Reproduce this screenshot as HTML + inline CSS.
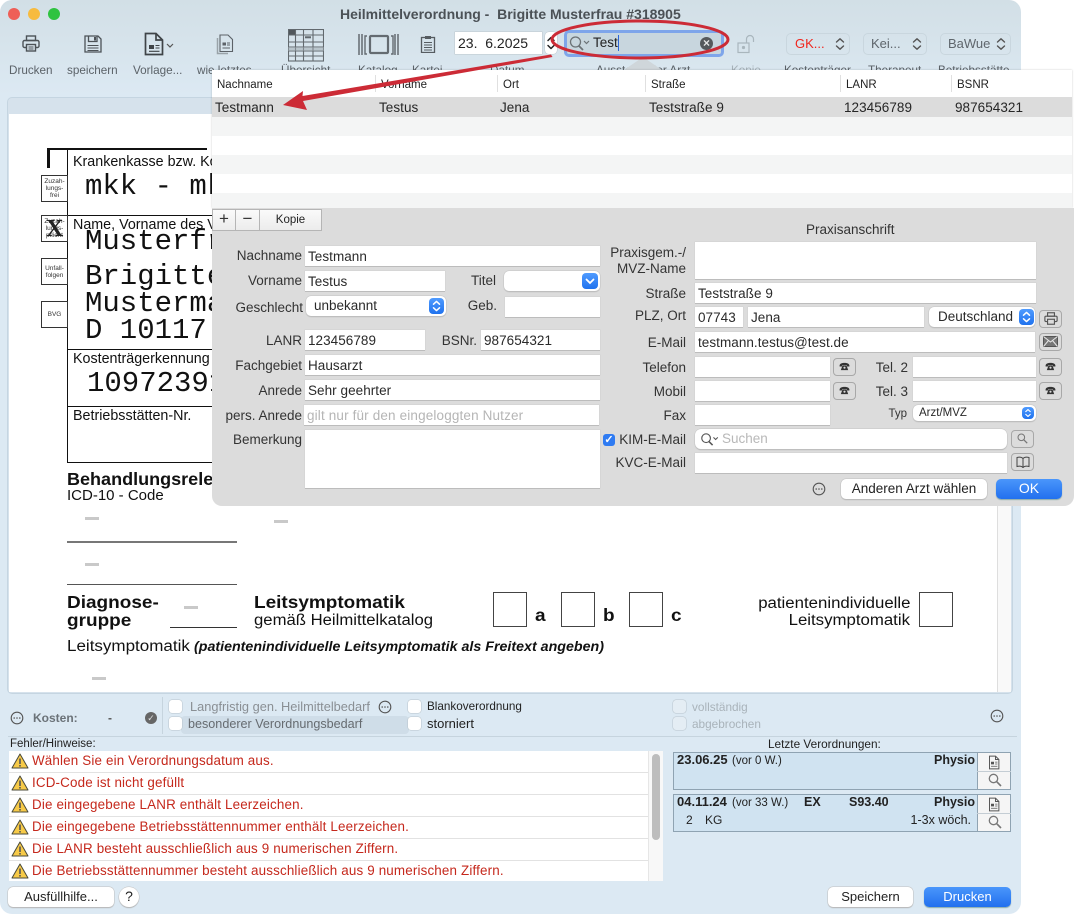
<!DOCTYPE html>
<html lang="de"><head><meta charset="utf-8"><title>Heilmittelverordnung</title>
<style>
*{box-sizing:border-box}
html,body{margin:0;padding:0;background:#fff}
body{position:relative;width:1087px;height:914px;overflow:hidden;font-family:"Liberation Sans",sans-serif;font-size:13px;color:#262626}
.a{position:absolute}
.t{position:absolute;white-space:nowrap;line-height:16px}
.r{position:absolute;white-space:nowrap;line-height:16px;text-align:right}
#win{position:absolute;left:0;top:0;width:1021px;height:914px;border-radius:12px;background:linear-gradient(#d2dfe6 0,#d6e3eb 40px,#dce9f3 95px);overflow:hidden}
.tl{font-size:11.7px;color:#5b6268}
.pg{position:absolute;background:#111}
.m{font-family:"Liberation Mono",monospace;font-size:29px;line-height:30px;color:#111;position:absolute;white-space:nowrap}
.h{position:absolute;white-space:nowrap;color:#111;line-height:18px}
.bx{font-weight:bold;font-size:17.5px;transform:scaleX(1.085);transform-origin:left center}
.sb{position:absolute;border:1px solid #333;background:#fff;font-size:6.5px;line-height:7px;text-align:center;color:#333;padding-top:2px;width:27px;height:27px}
.dash{position:absolute;width:14px;height:3px;background:#c9c9c9}
.ck{position:absolute;width:13px;height:13px;background:#fff;border-radius:3px;box-shadow:0 0 0 .5px #b8c4cc}
.row{position:absolute;left:0;width:639px;height:22px;border-bottom:1px solid #e2e2e2;color:#c5281c;font-size:13.4px;line-height:20px;padding-left:23px;white-space:nowrap;letter-spacing:.16px}
.row svg{position:absolute;left:2px;top:2px}
.tb{position:absolute;height:20px;border:1px solid #c9d6de;border-radius:5px;font-size:13px;line-height:18px;color:#5f666c}
#pop{position:absolute;left:212px;top:70px;width:862px;height:437px}
.th{position:absolute;top:8px;font-size:11.5px;line-height:14px;color:#222;white-space:nowrap}
.thd{position:absolute;top:5px;width:1px;height:17px;background:#e0e0e0}
.td{position:absolute;top:30px;font-size:13.5px;line-height:16px;color:#262626;white-space:nowrap;letter-spacing:.05px}
.s{position:absolute;left:0;width:860px;height:19px}
.f{position:absolute;background:#fff;box-shadow:0 0 0 .5px #cfcfcf,0 1px 0 #a9a9a9;font-size:13.5px;line-height:21px;padding-left:3px;height:20px;white-space:nowrap;overflow:hidden;color:#2a2a2a;letter-spacing:.05px}
.p{position:absolute;background:#fff;border-radius:5px;box-shadow:0 0 0 .5px #c4c4c4,0 1px 1px #aaa;height:20px;font-size:13.5px;line-height:19px;white-space:nowrap;color:#2a2a2a}
.st{position:absolute;right:2px;top:2px;width:15px;height:16px;border-radius:4px;background:linear-gradient(#4f9bff,#1f72ee)}
.b{position:absolute;width:23px;height:18px;border:1px solid #a8a8a8;border-radius:4px;background:#dcdcdc;text-align:center;font-size:11px;line-height:15px;color:#333}
.lb{position:absolute;white-space:nowrap;text-align:right;line-height:16px;font-size:13.5px;color:#333;margin-top:1px}
.btn{position:absolute;height:20px;border-radius:5px;background:#fff;box-shadow:0 0 0 .5px #c0c0c0,0 1px 1px #a8a8a8;text-align:center;font-size:13px;line-height:19px;color:#222}
.blue{background:linear-gradient(#4a96fb,#2270ee);color:#fff;box-shadow:0 1px 1px #8aa}
</style></head><body>
<svg width="0" height="0" style="position:absolute">
<defs>
<symbol id="dots" viewBox="0 0 14 14"><circle cx="7" cy="7" r="5.8" fill="none" stroke="#555" stroke-width="1.1"/><circle cx="4.2" cy="7" r=".8" fill="#555"/><circle cx="7" cy="7" r=".8" fill="#555"/><circle cx="9.8" cy="7" r=".8" fill="#555"/></symbol>
<symbol id="warn" viewBox="0 0 18 16"><path d="M9 1 L17 15 H1 Z" fill="#f7ca48" stroke="#4a4a3a" stroke-width="1" stroke-linejoin="round"/><rect x="8.2" y="5.5" width="1.6" height="5.5" fill="#555"/><rect x="8.2" y="12" width="1.6" height="1.6" fill="#555"/></symbol>
<symbol id="updn" viewBox="0 0 15 16"><path d="M4.5 6.2 L7.5 3.4 L10.5 6.2 M4.5 9.8 L7.5 12.6 L10.5 9.8" fill="none" stroke="#fff" stroke-width="1.5" stroke-linecap="round" stroke-linejoin="round"/></symbol>
<symbol id="ud" viewBox="0 0 12 16"><path d="M2.5 6 L6 2.8 L9.5 6 M2.5 10 L6 13.2 L9.5 10" fill="none" stroke="#555" stroke-width="1.4" stroke-linecap="round" stroke-linejoin="round"/></symbol>
<symbol id="doc" viewBox="0 0 16 20"><path d="M2 1.5 H10 L14.5 6 V18.5 H2 Z M10 1.5 V6 H14.5" fill="none" stroke="#555" stroke-width="1.3"/><rect x="4" y="9" width="4" height="3.5" fill="#555"/><path d="M9.5 9.5H12.5M9.5 12H12.5M4 15H12.5" stroke="#555"/></symbol>
<symbol id="mag" viewBox="0 0 14 14"><circle cx="5.5" cy="5.5" r="4.2" fill="none" stroke="#777" stroke-width="1.3"/><path d="M8.7 8.7 L13 13" stroke="#777" stroke-width="1.6"/></symbol>
<symbol id="ph" viewBox="0 0 13 11"><path d="M.5 4.500C.5 2 3.500 1 6.500 1S12.500 2 12.500 4.500V5.500H9.500V4H3.500V5.500H.5Z" fill="#333"/><path d="M4 4.500H9L11 10H2Z" fill="#333"/><circle cx="6.500" cy="7" r="1.300" fill="#dcdcdc"/></symbol>
</defs></svg>

<div id="win">
<!-- traffic lights -->
<div class="a" style="left:8px;top:8px;width:12px;height:12px;border-radius:50%;background:#ee5f57"></div>
<div class="a" style="left:28px;top:8px;width:12px;height:12px;border-radius:50%;background:#f7bb3f"></div>
<div class="a" style="left:48px;top:8px;width:12px;height:12px;border-radius:50%;background:#2fc340"></div>
<div class="t" style="left:340px;top:6px;font-weight:bold;font-size:14px;color:#4b5156;white-space:pre">Heilmittelverordnung -  Brigitte Musterfrau #318905</div>

<!-- toolbar icons -->
<svg class="a" style="left:22px;top:35px" width="18" height="17" viewBox="0 0 18 17" fill="none" stroke="#4c5257" stroke-width="1.4"><rect x="4.5" y="1" width="9" height="4.5"/><rect x="1" y="5.5" width="16" height="7" rx="1.5"/><rect x="4.5" y="9.5" width="9" height="6.5" fill="#d8e4ec"/><path d="M6.5 12H11.5M6.5 14H11.5" stroke-width=".9"/></svg>
<svg class="a" style="left:84px;top:35px" width="18" height="18" viewBox="0 0 18 18" fill="none" stroke="#4c5257" stroke-width="1.3"><path d="M1 1H14L17 4V17H1Z"/><path d="M4.5 1V6.5H13V1"/><rect x="10" y="2" width="2" height="3.5" fill="#4c5257" stroke="none"/><path d="M3.5 10.5H14.500M3.500 13H14.500M3.500 15.500H14.500" stroke-width="1"/></svg>
<svg class="a" style="left:144px;top:32px" width="20" height="24" viewBox="0 0 20 24" fill="none" stroke="#3f4448" stroke-width="1.7"><path d="M1.500 1.500H12L18.500 8V22.500H1.500Z"/><path d="M12 1.500V8H18.500"/><rect x="5" y="13" width="5" height="4" fill="#3f4448" stroke="none"/><path d="M11.500 13.500H15.500M11.500 16H15.500M5 19.300H15.500" stroke-width="1.100"/></svg>
<svg class="a" style="left:166px;top:43px" width="8" height="6" viewBox="0 0 8 6"><path d="M1 1L4 4L7 1" fill="none" stroke="#555" stroke-width="1.200"/></svg>
<svg class="a" style="left:216px;top:34px" width="18" height="21" viewBox="0 0 18 21" fill="none" stroke="#5c6268" stroke-width="1.100"><path d="M1.500 4V19.500H12" stroke="#9aa3a9" stroke-width="1.500"/><path d="M4 1H12L16.500 5.500V17.500H4Z"/><rect x="6.500" y="8.500" width="3.500" height="3" fill="#5c6268" stroke="none"/><path d="M11 9H14M11 11H14M6.500 14H14" stroke-width=".9"/></svg>
<svg class="a" style="left:288px;top:29px" width="36" height="33" viewBox="0 0 36 33" fill="none" stroke="#62696e" stroke-width="1.100"><rect x=".5" y=".5" width="35" height="31.500"/><rect x="1" y="1" width="6" height="5" fill="#51575c" stroke="none"/><path d="M0 6H36M0 13H36M0 18H36M0 22H36M0 27H36M7.500 0V32M15.500 0V32M25 0V32"/><path d="M17 8.300H23" stroke-width="2"/><rect x="0" y="18" width="36" height="4" fill="#9ba5ac" stroke="none" opacity=".5"/></svg>
<svg class="a" style="left:358px;top:33px" width="41" height="24" viewBox="0 0 41 24" fill="none" stroke="#646b71"><rect x="12" y="3" width="18" height="17" rx="1" stroke-width="2.200"/><path d="M1 1V22M4 1V22M37 1V22M40 1V22" stroke-width="1.500"/><path d="M9 3 L7 3V21L9 21M33 3L35 3V21L33 21" stroke-width="1.400"/></svg>
<svg class="a" style="left:420px;top:35px" width="16" height="18" viewBox="0 0 16 18" fill="none" stroke="#565c61" stroke-width="1.300"><rect x="1.500" y="2.500" width="13" height="15"/><rect x="5" y="1" width="6" height="3" fill="#565c61" stroke="none"/><path d="M4 7.500H12M4 10H12M4 12.500H12M4 15H12" stroke-width="1"/></svg>

<div class="t tl" style="left:9px;top:63px">Drucken</div>
<div class="t tl" style="left:67px;top:63px">speichern</div>
<div class="t tl" style="left:133px;top:63px">Vorlage...</div>
<div class="t tl" style="left:197px;top:63px">wie letztes</div>
<div class="t tl" style="left:281px;top:63px">Übersicht</div>
<div class="t tl" style="left:358px;top:63px">Katalog</div>
<div class="t tl" style="left:412px;top:63px">Kartei</div>
<div class="t tl" style="left:490px;top:63px">Datum</div>
<div class="t tl" style="left:596px;top:63px">Ausstellender Arzt</div>
<div class="t tl" style="left:731px;top:63px;color:#a6b1b8">Kopie</div>
<div class="t tl" style="left:784px;top:63px">Kostenträger</div>
<div class="t tl" style="left:868px;top:63px">Therapeut</div>
<div class="t tl" style="left:938px;top:63px">Betriebsstätte</div>

<!-- date -->
<div class="a" style="left:455px;top:32px;width:87px;height:22px;background:#fff;box-shadow:0 0 0 .5px #bcc6cc;font-size:14px;line-height:22px;padding-left:3px;white-space:pre;color:#222">23.  6.2025</div>
<div class="a" style="left:545px;top:32px;width:12px;height:22px;background:#fff;border-radius:4px;box-shadow:0 0 0 .5px #bcc6cc"><svg width="12" height="22" viewBox="0 0 12 22" style="display:block"><path d="M3 8.500L6 5.500L9 8.500M3 13.500L6 16.500L9 13.500" fill="none" stroke="#222" stroke-width="1.500" stroke-linecap="round" stroke-linejoin="round"/></svg></div>

<!-- search -->
<div class="a" style="left:564px;top:30px;width:160px;height:27px;border:3px solid #7ea5ea;border-radius:5px;background:#c8d6de"></div>
<svg class="a" style="left:569px;top:36px" width="22" height="15" viewBox="0 0 22 15" fill="none" stroke="#6c7276"><circle cx="6.500" cy="6" r="5" stroke-width="1.300"/><path d="M10 10L14 14" stroke-width="1.800"/><path d="M15 5L17.500 7.500L20 5" stroke-width="1.200"/></svg>
<div class="t" style="left:593px;top:35px;font-size:13.500px;color:#222">Test</div>
<div class="a" style="left:618px;top:35px;width:1px;height:16px;background:#2b66d8"></div>
<div class="a" style="left:700px;top:37px;width:13px;height:13px;border-radius:50%;background:#55595c;color:#e6e6e6;font-size:12px;line-height:12px;text-align:center;font-weight:bold">×</div>

<svg class="a" style="left:737px;top:34px" width="20" height="20" viewBox="0 0 20 20" fill="none" stroke="#a9b6bd" stroke-width="1.200"><rect x="1" y="9" width="11" height="9.500"/><circle cx="6.500" cy="13.500" r="1" fill="#a9b6bd"/><path d="M9.500 9V5A3.500 3.500 0 0 1 16.500 5V8"/></svg>

<div class="tb" style="left:786px;top:33px;width:64px;height:22px;line-height:20px;padding-left:8px;color:#f0261e">GK...<svg class="a" style="left:47px;top:2px" width="12" height="16"><use href="#ud"/></svg></div>
<div class="tb" style="left:863px;top:33px;width:64px;height:22px;line-height:20px;padding-left:7px">Kei...<svg class="a" style="left:47px;top:2px" width="12" height="16"><use href="#ud"/></svg></div>
<div class="tb" style="left:940px;top:33px;width:71px;height:22px;line-height:20px;padding-left:7px">BaWue<svg class="a" style="left:54px;top:2px" width="12" height="16"><use href="#ud"/></svg></div>

<!-- document frame -->
<div class="a" style="left:7px;top:97px;width:1006px;height:597px;border:1px solid #c5d5e1;border-radius:5px;background:#d6e2ec;overflow:hidden">
  <div class="a" style="left:1px;top:16px;width:989px;height:578px;background:#fff"></div>
  <div class="a" style="left:989px;top:16px;width:14px;height:578px;background:#f9f9f9;border-left:1px solid #dedede"></div>
</div>

<!-- form -->
<div class="pg" style="left:47px;top:148px;width:3px;height:20px"></div>
<div class="pg" style="left:47px;top:148px;width:160px;height:2px"></div>
<div class="pg" style="left:67px;top:149px;width:1px;height:314px"></div>
<div class="pg" style="left:67px;top:462px;width:160px;height:1px"></div>
<div class="pg" style="left:67px;top:215px;width:160px;height:1px"></div>
<div class="pg" style="left:67px;top:349px;width:160px;height:1px"></div>
<div class="pg" style="left:67px;top:406px;width:160px;height:1px"></div>
<div class="sb" style="left:41px;top:175px">Zuzah-<br>lungs-<br>frei</div>
<div class="sb" style="left:41px;top:215px">Zuzah-<br>lungs-<br>pflicht</div>
<div class="sb" style="left:41px;top:258px;padding-top:6px">Unfall-<br>folgen</div>
<div class="sb" style="left:41px;top:301px;padding-top:9px">BVG</div>
<div class="t" style="left:46px;top:217px;font:bold 24px/24px 'Liberation Serif',serif;color:#222">X</div>
<div class="h" style="left:73px;top:153px;font-size:14.300px">Krankenkasse bzw. Kostenträger</div>
<div class="m" style="left:85px;top:172px">mkk - mkk</div>
<div class="h" style="left:73px;top:216px;font-size:14.300px">Name, Vorname des Versicherten</div>
<div class="m" style="left:85px;top:227px">Musterfrau</div>
<div class="m" style="left:85px;top:262px">Brigitte</div>
<div class="m" style="left:85px;top:289px">Mustermannstr</div>
<div class="m" style="left:85px;top:316px">D 10117 Berlin</div>
<div class="h" style="left:73px;top:350px;font-size:14.300px">Kostenträgerkennung</div>
<div class="m" style="left:87px;top:369px">109723913</div>
<div class="h" style="left:73px;top:407px;font-size:14.300px">Betriebsstätten-Nr.</div>
<div class="h bx" style="left:67px;top:470px;transform:scaleX(1.03)">Behandlungsrelevante Diagnosen</div>
<div class="h" style="left:67px;top:487px;font-size:15px">ICD-10 - Code</div>
<div class="dash" style="left:85px;top:517px"></div>
<div class="dash" style="left:274px;top:520px"></div>
<div class="a" style="left:67px;top:541px;width:170px;height:2px;background:#777"></div>
<div class="dash" style="left:85px;top:563px"></div>
<div class="a" style="left:67px;top:584px;width:170px;height:1px;background:#555"></div>
<div class="h bx" style="left:67px;top:593px">Diagnose-</div>
<div class="h bx" style="left:67px;top:611px">gruppe</div>
<div class="dash" style="left:184px;top:606px"></div>
<div class="a" style="left:170px;top:627px;width:67px;height:1px;background:#333"></div>
<div class="h bx" style="left:254px;top:593px">Leitsymptomatik</div>
<div class="h" style="left:254px;top:612px;font-size:15.500px;transform:scaleX(1.077);transform-origin:left center">gemäß Heilmittelkatalog</div>
<div class="a" style="left:493px;top:592px;width:34px;height:35px;border:1px solid #444"></div>
<div class="h bx" style="left:535px;top:606px">a</div>
<div class="a" style="left:561px;top:592px;width:34px;height:35px;border:1px solid #444"></div>
<div class="h bx" style="left:603px;top:606px">b</div>
<div class="a" style="left:629px;top:592px;width:34px;height:35px;border:1px solid #444"></div>
<div class="h bx" style="left:671px;top:606px">c</div>
<div class="h" style="right:111px;top:595px;font-size:15.500px;transform:scaleX(1.084);transform-origin:right center">patientenindividuelle</div>
<div class="h" style="right:111px;top:612px;font-size:15.500px;transform:scaleX(1.084);transform-origin:right center">Leitsymptomatik</div>
<div class="a" style="left:919px;top:592px;width:34px;height:35px;border:1px solid #444"></div>
<div class="h" style="left:67px;top:638px;font-size:15.500px;transform:scaleX(1.097);transform-origin:left center">Leitsymptomatik</div>
<div class="h" style="left:194px;top:638px;font-size:13.500px;font-weight:bold;font-style:italic;transform:scaleX(1.055);transform-origin:left center">(patientenindividuelle Leitsymptomatik als Freitext angeben)</div>
<div class="dash" style="left:92px;top:677px"></div>

<!-- status row -->
<svg class="a" style="left:10px;top:711px" width="14" height="14"><use href="#dots"/></svg>
<div class="t" style="left:33px;top:710px;font-weight:bold;font-size:12px;color:#6b7278">Kosten:</div>
<div class="t" style="left:108px;top:710px;font-weight:bold;font-size:12px;color:#555">-</div>
<div class="a" style="left:145px;top:712px;width:12px;height:12px;border-radius:50%;background:#666;color:#ddd;font-size:9px;line-height:12px;text-align:center">✓</div>
<div class="a" style="left:162px;top:697px;width:1px;height:37px;background:#c6d4de"></div>
<div class="ck" style="left:169px;top:700px"></div>
<div class="t" style="left:190px;top:699px;font-size:12.800px;color:#8a8f94">Langfristig gen. Heilmittelbedarf</div>
<svg class="a" style="left:378px;top:700px" width="14" height="14"><use href="#dots"/></svg>
<div class="a" style="left:181px;top:716px;width:228px;height:18px;background:#cfdde8;border-radius:4px"></div>
<div class="ck" style="left:169px;top:717px"></div>
<div class="t" style="left:188px;top:716px;font-size:12.600px;color:#666b70">besonderer Verordnungsbedarf</div>
<div class="ck" style="left:408px;top:700px"></div>
<div class="t" style="left:427px;top:699px;font-size:11.700px;color:#222">Blankoverordnung</div>
<div class="ck" style="left:408px;top:717px"></div>
<div class="t" style="left:427px;top:716px;font-size:13px;color:#222">storniert</div>
<div class="ck" style="left:673px;top:700px;background:#e4edf4"></div>
<div class="t" style="left:692px;top:699px;font-size:11.800px;color:#a9b3ba">vollständig</div>
<div class="ck" style="left:673px;top:717px;background:#e4edf4"></div>
<div class="t" style="left:692px;top:716px;font-size:11.800px;color:#a9b3ba">abgebrochen</div>
<svg class="a" style="left:990px;top:709px" width="14" height="14"><use href="#dots"/></svg>
<div class="a" style="left:8px;top:736px;width:1009px;height:1px;background:#c6d4de"></div>

<div class="t" style="left:10px;top:736px;font-size:11.500px;color:#222">Fehler/Hinweise:</div>
<div class="t" style="left:768px;top:736px;font-size:11.800px;color:#222">Letzte Verordnungen:</div>

<!-- error list -->
<div class="a" style="left:9px;top:751px;width:654px;height:130px;background:#fff">
  <div class="row" style="top:0"><svg width="18" height="16"><use href="#warn"/></svg>Wählen Sie ein Verordnungsdatum aus.</div>
  <div class="row" style="top:22px"><svg width="18" height="16"><use href="#warn"/></svg>ICD-Code ist nicht gefüllt</div>
  <div class="row" style="top:44px"><svg width="18" height="16"><use href="#warn"/></svg>Die eingegebene LANR enthält Leerzeichen.</div>
  <div class="row" style="top:66px"><svg width="18" height="16"><use href="#warn"/></svg>Die eingegebene Betriebsstättennummer enthält Leerzeichen.</div>
  <div class="row" style="top:88px"><svg width="18" height="16"><use href="#warn"/></svg>Die LANR besteht ausschließlich aus 9 numerischen Ziffern.</div>
  <div class="row" style="top:110px;border-bottom:0"><svg width="18" height="16"><use href="#warn"/></svg>Die Betriebsstättennummer besteht ausschließlich aus 9 numerischen Ziffern.</div>
  <div class="a" style="left:639px;top:0;width:15px;height:130px;background:#f8f8f8;border-left:1px solid #e6e6e6"></div>
  <div class="a" style="left:643px;top:3px;width:8px;height:86px;border-radius:4px;background:#bdbdbd"></div>
</div>

<!-- letzte -->
<div class="a" style="left:673px;top:752px;width:338px;height:38px;background:#d0e3f1;border:1px solid #8fa3b2"></div>
<div class="a" style="left:977px;top:752px;width:34px;height:38px;background:#f5f5f5;border:1px solid #8fa3b2"></div>
<div class="a" style="left:977px;top:771px;width:34px;height:1px;background:#c4cdd4"></div>
<svg class="a" style="left:988px;top:755px" width="12" height="15"><use href="#doc"/></svg>
<svg class="a" style="left:988px;top:773px" width="14" height="14"><use href="#mag"/></svg>
<div class="t" style="left:677px;top:752px;font-weight:bold;font-size:13px;color:#222">23.06.25</div>
<div class="t" style="left:732px;top:753px;font-size:11.500px;color:#222">(vor 0 W.)</div>
<div class="r" style="right:46px;top:752px;font-weight:bold;font-size:12.500px;color:#222">Physio</div>
<div class="a" style="left:673px;top:794px;width:338px;height:38px;background:#d0e3f1;border:1px solid #8fa3b2"></div>
<div class="a" style="left:977px;top:794px;width:34px;height:38px;background:#f5f5f5;border:1px solid #8fa3b2"></div>
<div class="a" style="left:977px;top:813px;width:34px;height:1px;background:#c4cdd4"></div>
<svg class="a" style="left:988px;top:797px" width="12" height="15"><use href="#doc"/></svg>
<svg class="a" style="left:988px;top:815px" width="14" height="14"><use href="#mag"/></svg>
<div class="t" style="left:677px;top:794px;font-weight:bold;font-size:13px;color:#222">04.11.24</div>
<div class="t" style="left:732px;top:795px;font-size:11.500px;color:#222">(vor 33 W.)</div>
<div class="t" style="left:804px;top:794px;font-weight:bold;font-size:12.500px;color:#222">EX</div>
<div class="t" style="left:849px;top:794px;font-weight:bold;font-size:12.500px;color:#222">S93.40</div>
<div class="r" style="right:46px;top:794px;font-weight:bold;font-size:12.500px;color:#222">Physio</div>
<div class="t" style="left:686px;top:812px;font-size:12px;color:#222">2</div>
<div class="t" style="left:705px;top:812px;font-size:12px;color:#222">KG</div>
<div class="r" style="right:50px;top:812px;font-size:12.500px;color:#222">1-3x wöch.</div>

<!-- bottom buttons -->
<div class="btn" style="left:8px;top:887px;width:106px">Ausfüllhilfe...</div>
<div class="btn" style="left:119px;top:887px;width:20px;border-radius:50%;font-size:14px">?</div>
<div class="btn" style="left:828px;top:887px;width:85px">Speichern</div>
<div class="btn blue" style="left:924px;top:887px;width:87px">Drucken</div>
</div>

<!-- popup -->
<svg class="a" style="left:622px;top:57px" width="42" height="13" viewBox="0 0 42 13"><path d="M21 0L40 13H2Z" fill="#cfd6da"/></svg>
<div id="pop">
  <div class="a" style="left:0;top:0;width:860px;height:138px;background:#fff;box-shadow:0 0 2px rgba(0,0,0,.2)"></div>
  <div class="th" style="left:5px">Nachname</div>
  <div class="thd" style="left:163px"></div><div class="th" style="left:169px">Vorname</div>
  <div class="thd" style="left:285px"></div><div class="th" style="left:291px">Ort</div>
  <div class="thd" style="left:433px"></div><div class="th" style="left:439px">Straße</div>
  <div class="thd" style="left:628px"></div><div class="th" style="left:634px">LANR</div>
  <div class="thd" style="left:739px"></div><div class="th" style="left:745px">BSNR</div>
  <div class="a" style="left:0;top:27px;width:860px;height:20px;background:#dcdcdc"></div>
  <div class="td" style="left:3px">Testmann</div>
  <div class="td" style="left:167px">Testus</div>
  <div class="td" style="left:288px">Jena</div>
  <div class="td" style="left:437px">Teststraße 9</div>
  <div class="td" style="left:632px">123456789</div>
  <div class="td" style="left:743px">987654321</div>
  <div class="s" style="top:47px;background:#f4f5f5"></div>
  <div class="s" style="top:85px;background:#f4f5f5"></div>
  <div class="s" style="top:123px;height:15px;background:#f4f5f5"></div>

  <!-- form panel -->
  <div class="a" style="left:0;top:138px;width:862px;height:298px;background:#dcdcdc;border-radius:0 0 10px 10px"></div>
  <div class="a" style="left:0;top:139px;width:24px;height:22px;background:linear-gradient(#fafafa,#ececec);border:1px solid #b5b5b5;text-align:center;font-size:17px;line-height:18px;color:#333">+</div>
  <div class="a" style="left:24px;top:139px;width:24px;height:22px;background:linear-gradient(#fafafa,#ececec);border:1px solid #b5b5b5;border-left:0;text-align:center;font-size:17px;line-height:18px;color:#333">−</div>
  <div class="a" style="left:47px;top:139px;width:63px;height:22px;background:linear-gradient(#fafafa,#ececec);border:1px solid #b5b5b5;text-align:center;font-size:11.500px;line-height:20px;color:#222">Kopie</div>

  <div class="lb" style="right:772px;top:177px">Nachname</div>
  <div class="f" style="left:93px;top:176px;width:295px">Testmann</div>
  <div class="lb" style="right:772px;top:202px">Vorname</div>
  <div class="f" style="left:93px;top:201px;width:140px">Testus</div>
  <div class="lb" style="right:578px;top:202px">Titel</div>
  <div class="p" style="left:292px;top:201px;width:96px"><div class="st" style="width:16px"><svg width="16" height="16" viewBox="0 0 16 16"><path d="M4.500 6.500L8 10L11.500 6.500" fill="none" stroke="#fff" stroke-width="1.800" stroke-linecap="round"/></svg></div></div>
  <div class="lb" style="right:771px;top:229px">Geschlecht</div>
  <div class="p" style="left:94px;top:226px;width:140px;padding-left:8px">unbekannt<div class="st"><svg width="15" height="16"><use href="#updn"/></svg></div></div>
  <div class="lb" style="right:577px;top:227px">Geb.</div>
  <div class="f" style="left:293px;top:227px;width:95px"></div>
  <div class="lb" style="right:772px;top:262px">LANR</div>
  <div class="f" style="left:93px;top:260px;width:120px">123456789</div>
  <div class="lb" style="right:597px;top:262px">BSNr.</div>
  <div class="f" style="left:269px;top:260px;width:119px">987654321</div>
  <div class="lb" style="right:772px;top:287px">Fachgebiet</div>
  <div class="f" style="left:93px;top:285px;width:295px">Hausarzt</div>
  <div class="lb" style="right:772px;top:312px">Anrede</div>
  <div class="f" style="left:93px;top:310px;width:295px">Sehr geehrter</div>
  <div class="lb" style="right:772px;top:337px">pers. Anrede</div>
  <div class="f" style="left:92px;top:335px;width:295px;color:#b5b5b5;letter-spacing:.15px">gilt nur für den eingeloggten Nutzer</div>
  <div class="lb" style="right:772px;top:361px">Bemerkung</div>
  <div class="f" style="left:93px;top:360px;width:295px;height:58px"></div>

  <div class="t" style="left:594px;top:152px;color:#333;font-size:13.500px">Praxisanschrift</div>
  <div class="lb" style="right:388px;top:174px">Praxisgem.-/</div>
  <div class="lb" style="right:388px;top:190px">MVZ-Name</div>
  <div class="f" style="left:483px;top:172px;width:341px;height:37px"></div>
  <div class="lb" style="right:388px;top:215px">Straße</div>
  <div class="f" style="left:483px;top:213px;width:341px">Teststraße 9</div>
  <div class="lb" style="right:388px;top:237px">PLZ, Ort</div>
  <div class="f" style="left:483px;top:237px;width:48px">07743</div>
  <div class="f" style="left:536px;top:237px;width:176px">Jena</div>
  <div class="p" style="left:717px;top:237px;width:106px;padding-left:9px;height:20px">Deutschland<div class="st" style="right:1px"><svg width="15" height="16"><use href="#updn"/></svg></div></div>
  <div class="b" style="left:827px;top:240px"><svg width="14" height="13" viewBox="0 0 18 17" fill="none" stroke="#555" stroke-width="1.500" style="margin-top:1px"><rect x="4.500" y="1" width="9" height="4.500"/><rect x="1" y="5.500" width="16" height="7" rx="1.500"/><rect x="4.500" y="9.500" width="9" height="6.500" fill="#dcdcdc"/></svg></div>
  <div class="lb" style="right:388px;top:264px">E-Mail</div>
  <div class="f" style="left:483px;top:262px;width:340px">testmann.testus@test.de</div>
  <div class="b" style="left:827px;top:263px"><svg width="15" height="11" viewBox="0 0 15 11" style="margin-top:2px"><rect x=".5" y=".5" width="14" height="10" fill="#777" stroke="#555"/><path d="M.5 .5L7.500 6L14.500 .5M.5 10.500L5.500 4.500M14.500 10.500L9.500 4.500" fill="none" stroke="#e8e8e8"/></svg></div>
  <div class="lb" style="right:388px;top:289px">Telefon</div>
  <div class="f" style="left:483px;top:287px;width:135px"></div>
  <div class="b" style="left:621px;top:288px"><svg width="11" height="9" style="margin-top:3px"><use href="#ph"/></svg></div>
  <div class="lb" style="right:166px;top:289px">Tel. 2</div>
  <div class="f" style="left:701px;top:287px;width:123px"></div>
  <div class="b" style="left:827px;top:288px"><svg width="11" height="9" style="margin-top:3px"><use href="#ph"/></svg></div>
  <div class="lb" style="right:388px;top:313px">Mobil</div>
  <div class="f" style="left:483px;top:311px;width:135px"></div>
  <div class="b" style="left:621px;top:312px"><svg width="11" height="9" style="margin-top:3px"><use href="#ph"/></svg></div>
  <div class="lb" style="right:166px;top:313px">Tel. 3</div>
  <div class="f" style="left:701px;top:311px;width:123px"></div>
  <div class="b" style="left:827px;top:312px"><svg width="11" height="9" style="margin-top:3px"><use href="#ph"/></svg></div>
  <div class="lb" style="right:388px;top:337px">Fax</div>
  <div class="f" style="left:483px;top:335px;width:135px"></div>
  <div class="lb" style="right:167px;top:335px;font-size:11.500px">Typ</div>
  <div class="p" style="left:701px;top:335px;width:123px;height:16px;font-size:11.500px;line-height:17px;padding-left:6px">Arzt/MVZ<div class="st" style="top:2px;width:12px;height:12px"><svg width="12" height="12" viewBox="0 0 15 16" style="display:block"><use href="#updn"/></svg></div></div>
  <div class="a" style="left:391px;top:364px;width:12px;height:12px;border-radius:3px;background:#2f7bf2;color:#fff;font-size:11px;line-height:12px;text-align:center;font-weight:bold">✓</div>
  <div class="lb" style="right:388px;top:361px">KIM-E-Mail</div>
  <div class="p" style="left:483px;top:359px;width:312px;border-radius:6px;padding-left:27px;color:#b8b8b8;line-height:20px">Suchen</div>
  <svg class="a" style="left:487px;top:363px" width="22" height="13" viewBox="0 0 22 15" fill="none" stroke="#555"><circle cx="6.500" cy="6" r="5" stroke-width="1.300"/><path d="M10 10L14 14" stroke-width="1.800"/><path d="M15 5L17.500 7.500L20 5" stroke-width="1.200"/></svg>
  <div class="b" style="left:799px;top:360px"><svg width="11" height="11" style="margin-top:2px"><use href="#mag"/></svg></div>
  <div class="lb" style="right:388px;top:384px">KVC-E-Mail</div>
  <div class="f" style="left:483px;top:383px;width:312px"></div>
  <div class="b" style="left:799px;top:383px"><svg width="14" height="12" viewBox="0 0 14 12" fill="none" stroke="#444" stroke-width="1" style="margin-top:2px"><path d="M7 2.500C5.500 1 3 1 1 1.500V10.500C3 10 5.500 10 7 11.500C8.500 10 11 10 13 10.500V1.500C11 1 8.500 1 7 2.500ZM7 2.500V11.500"/></svg></div>
  <svg class="a" style="left:600px;top:412px" width="14" height="14"><use href="#dots"/></svg>
  <div class="btn" style="left:629px;top:409px;width:146px;font-size:13.500px">Anderen Arzt wählen</div>
  <div class="btn blue" style="left:784px;top:409px;width:66px;font-size:14px">OK</div>
</div>

<!-- annotations -->
<svg class="a" style="left:0;top:0;pointer-events:none" width="1087" height="914" viewBox="0 0 1087 914">
  <ellipse cx="640" cy="39.500" rx="88" ry="18.500" fill="none" stroke="#cc2b36" stroke-width="3"/>
  <path d="M551 54.500 L552.500 57 L303 101 L307 110 L283 105 L303 91 L302.500 96 Z" fill="#cc2b36"/>
</svg>
</body></html>
